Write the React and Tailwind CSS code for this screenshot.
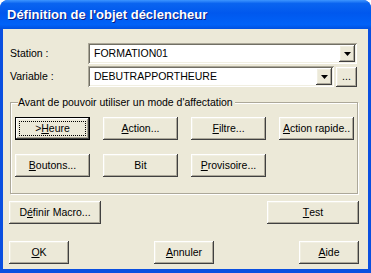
import React from "react";

const raised =
  "shadow-[inset_-1px_-1px_0_#404040,inset_1px_1px_0_#ffffff,inset_-2px_-2px_0_#aca899,inset_2px_2px_0_#f1efe2]";
const sunken =
  "shadow-[inset_1px_1px_0_#aca899,inset_-1px_-1px_0_#ffffff,inset_2px_2px_0_#716f64,inset_-2px_-2px_0_#f1efe2]";

const Key = ({ children }) => <span className="underline underline-offset-1">{children}</span>;

const Btn = ({ w = "w-[75px]", children, focused }) => {
  if (focused) {
    return (
      <div className={`${w} h-[23px] border border-black bg-[#ece9d8] flex`}>
        <div className={`flex-1 p-[3px] ${raised}`}>
          <div className="h-full border border-dotted border-black flex items-center justify-center">
            {children}
          </div>
        </div>
      </div>
    );
  }
  return (
    <div className={`${w} h-[23px] bg-[#ece9d8] flex items-center justify-center ${raised}`}>
      {children}
    </div>
  );
};

const Arrow = () => (
  <div className={`w-[16px] h-full bg-[#ece9d8] flex items-center justify-center ${raised}`}>
    <svg width="7" height="4" viewBox="0 0 7 4">
      <path d="M0 0h7L3.5 4z" fill="#000" />
    </svg>
  </div>
);

const Combo = ({ w, value }) => (
  <div className={`${w} h-[21px] bg-white p-[2px] flex ${sunken}`}>
    <div className="flex-1 pl-[4px] flex items-center">{value}</div>
    <Arrow />
  </div>
);

export default function App() {
  return (
    <div
      className="w-[371px] h-[273px] bg-white text-[10.5px] text-black leading-none"
      style={{ fontFamily: '"Liberation Sans", Arial, sans-serif' }}
    >
      <div className="w-full h-full flex flex-col rounded-t-[8px] bg-[#0a4fe0] overflow-hidden">
        {/* Title bar */}
        <div className="h-[29px] shrink-0 flex items-center pl-[7px] bg-[linear-gradient(to_bottom,#3d95ff_0%,#0a64f0_12%,#0058ee_45%,#0062f8_85%,#0050e0_100%)]">
          <span className="text-white font-bold text-[13px] [text-shadow:1px_1px_0_#0a1c80]">
            Définition de l'objet déclencheur
          </span>
        </div>

        {/* Body */}
        <div className="flex-1 mx-[3px] mb-[4px] bg-[#ece9d8] pl-[6px] pr-[9px] flex flex-col">
          <div className="mt-[14px] flex items-center">
            <span className="w-[79px] pl-[1px]">Station :</span>
            <Combo w="w-[269px]" value="FORMATION01" />
          </div>
          <div className="mt-[2px] flex items-center">
            <span className="w-[79px] pl-[1px]">Variable :</span>
            <Combo w="w-[246px]" value="DEBUTRAPPORTHEURE" />
            <div className={`ml-[2px] w-[21px] h-[20px] bg-[#ece9d8] flex items-center justify-center ${raised}`}>
              ...
            </div>
          </div>

          {/* Group box */}
          <fieldset className="mt-[10px] ml-[1px] mr-[1px] h-[97px] border border-[#aca899] shadow-[inset_1px_1px_0_#ffffff,1px_1px_0_#ffffff] pl-[4px] pt-[9px]">
            <legend className="ml-[3px] pr-[2px] bg-[#ece9d8]">Avant de pouvoir utiliser un mode d'affectation</legend>
            <div className="flex gap-[13px]">
              <Btn focused>
                &gt;<Key>H</Key>eure
              </Btn>
              <Btn>
                <Key>A</Key>ction...
              </Btn>
              <Btn>
                <Key>F</Key>iltre...
              </Btn>
              <Btn>
                <Key>A</Key>ction rapide..
              </Btn>
            </div>
            <div className="mt-[14px] flex gap-[13px]">
              <Btn>
                <Key>B</Key>outons...
              </Btn>
              <Btn>Bit</Btn>
              <Btn>
                <Key>P</Key>rovisoire...
              </Btn>
            </div>
          </fieldset>

          <div className="mt-[7px] flex justify-between">
            <Btn w="w-[92px]">
              D<Key>é</Key>finir Macro...
            </Btn>
            <Btn w="w-[92px]">
              <Key>T</Key>est
            </Btn>
          </div>

          <div className="mt-[17px] flex justify-between">
            <Btn w="w-[60px]">
              <Key>O</Key>K
            </Btn>
            <Btn w="w-[60px]">
              <Key>A</Key>nnuler
            </Btn>
            <Btn w="w-[60px]">
              <Key>A</Key>ide
            </Btn>
          </div>
        </div>
      </div>
    </div>
  );
}
